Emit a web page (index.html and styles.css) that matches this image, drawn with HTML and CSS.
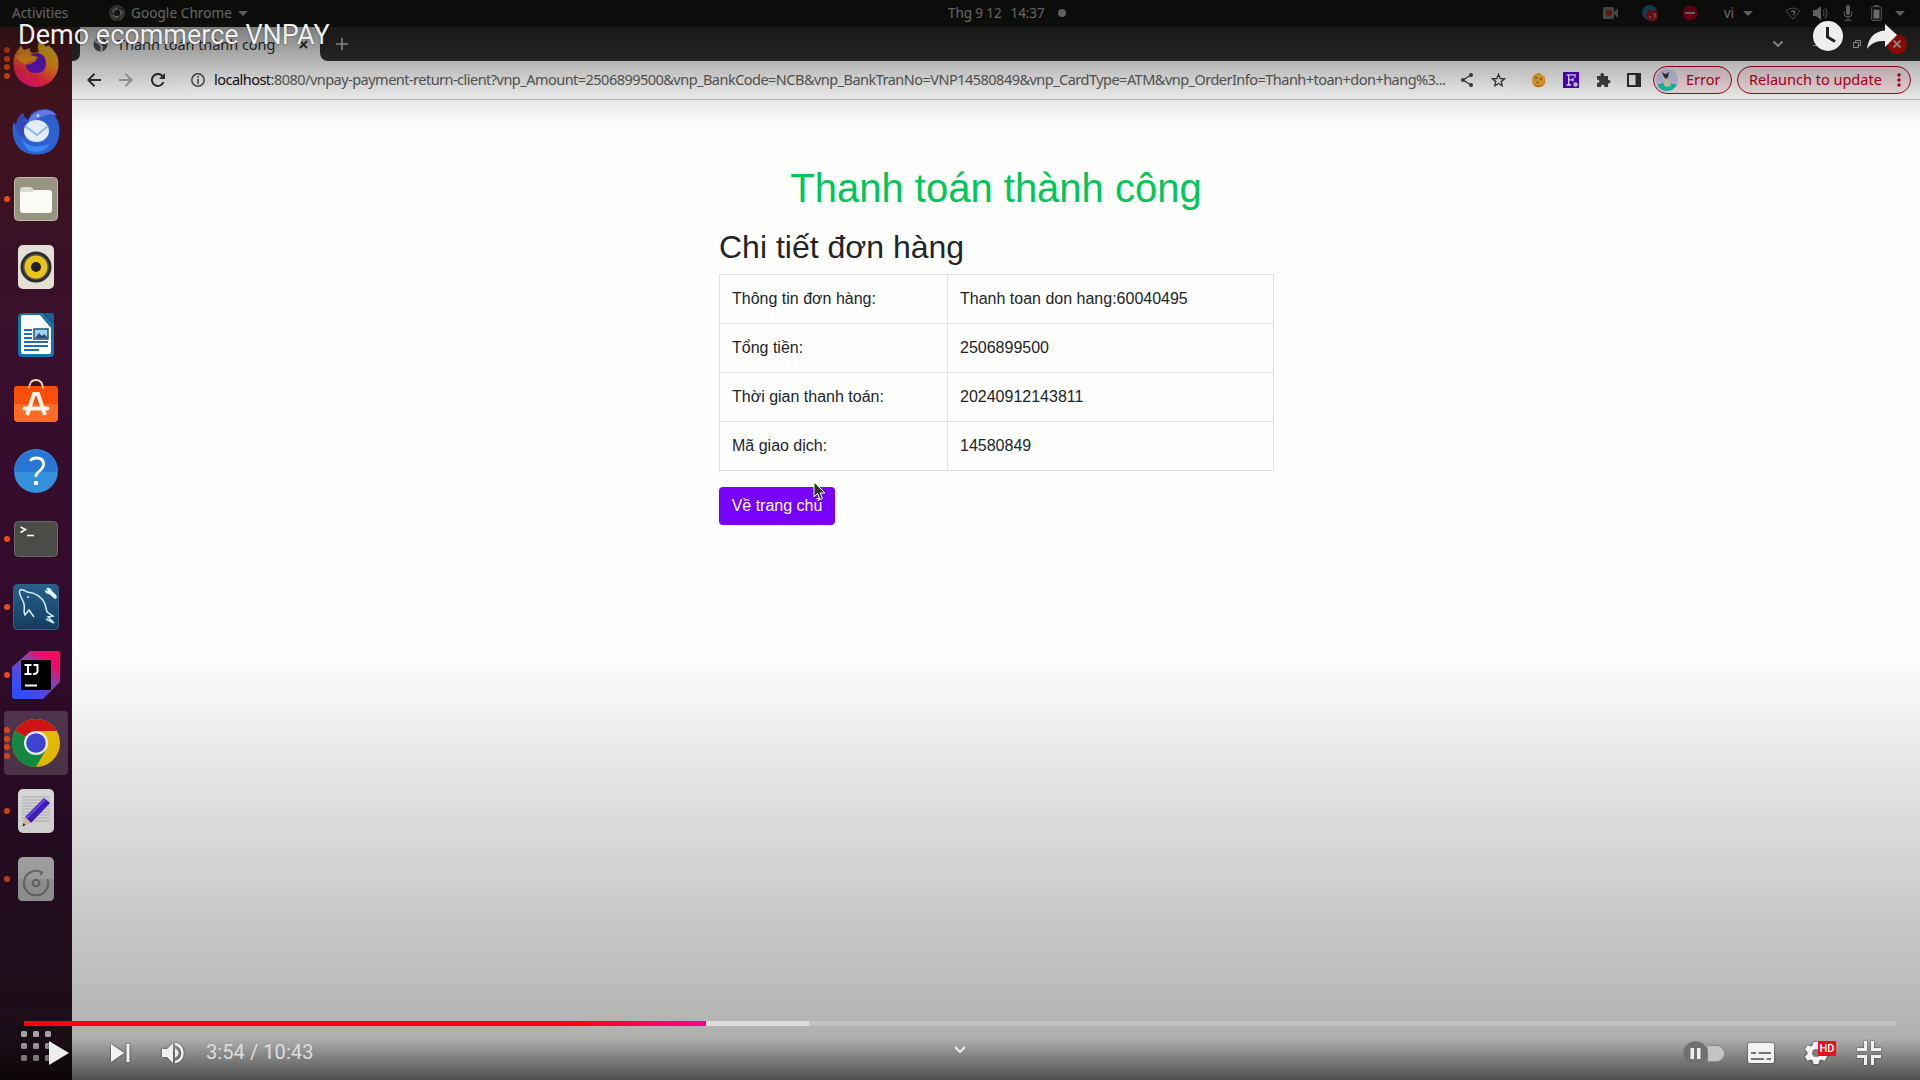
FILE: index.html
```html
<!DOCTYPE html>
<html lang="vi">
<head>
<meta charset="utf-8">
<title>Demo ecommerce VNPAY</title>
<link rel="stylesheet" href="styles.css">
</head>
<body>
<div class="screen">
  <header class="topbar">
    <div class="topbar-left">
      <span class="activities">Activities</span>
      <svg class="app-ico" width="16" height="16" viewBox="0 0 16 16"><circle cx="8" cy="8" r="8" fill="#777"/><circle cx="8" cy="8" r="4" fill="#333" stroke="#ddd" stroke-width="1.4"/><path d="M8 4h7M4.500 10L1 4M11.500 10L8 16" stroke="#333" stroke-width="1"/></svg>
      <span class="app-name">Google Chrome</span>
      <i class="caret"></i>
    </div>
    <div class="clock"><span class="clock-date">Thg 9 12</span><span>14:37</span><i class="dot"></i></div>
    <div class="tray">
      <svg width="16" height="12" viewBox="0 0 16 12"><rect width="11" height="12" rx="1.500" fill="#9a9a9a"/><path d="M11 5l4-4v10l-4-4z" fill="#9a9a9a"/><circle cx="6" cy="6" r="3" fill="#e02a1a"/></svg>
      <svg width="16" height="16" viewBox="0 0 16 16"><circle cx="7.500" cy="7.500" r="7.500" fill="#2b87b5"/><rect x="4" y="5" width="12" height="11" rx="5" fill="#e0202a"/><path d="M7 12h2M11 9h2v3" stroke="#fff" stroke-width="1" fill="none"/></svg>
      <svg width="16" height="16" viewBox="0 0 16 16"><circle cx="8" cy="8" r="7.500" fill="#d80030"/><path d="M3 8h10" stroke="#ddd" stroke-width="2"/></svg>
      <span class="lang">vi</span>
      <i class="caret lang-caret"></i>
      <svg class="wifi" width="16" height="13" viewBox="0 0 16 13"><path d="M1 4q7-6 14 0L8 12z" fill="none" stroke="#aaa" stroke-width="1"/><path d="M6 5q2-2 4 0q0 1-2 3" fill="none" stroke="#ddd" stroke-width="1.400"/></svg>
      <svg class="spk" width="16" height="14" viewBox="0 0 16 14"><path d="M0 4h3l5-4v14l-5-4H0z" fill="#ddd"/><path d="M10 4q2 3 0 6M12 2q4 5 0 10" fill="none" stroke="#999" stroke-width="1.300"/></svg>
      <svg class="mic" width="10" height="16" viewBox="0 0 10 16"><rect x="3" width="4" height="10" rx="2" fill="#ddd"/><path d="M1 6v2q0 4 4 4t4-4V6M5 12v3M2 15.300h6" fill="none" stroke="#ccc"/></svg>
      <svg class="bat" width="11" height="16" viewBox="0 0 11 16"><path d="M3.500 0h4v2h-4z" fill="#ccc"/><rect x=".7" y="1.700" width="9.600" height="13.600" rx="1" fill="none" stroke="#ccc"/><rect x="2.500" y="4.500" width="6" height="9" fill="#eee"/></svg>
      <i class="caret"></i>
    </div>
  </header>

  <div class="desktop">
    <nav class="dock">
      <div class="dock-item"><span class="pips"><i></i><i></i><i></i><i></i></span>
        <svg width="48" height="48" viewBox="0 0 48 48"><defs><linearGradient id="ff" x1=".75" y1="0" x2=".3" y2="1"><stop offset="0" stop-color="#ffe32c"/><stop offset=".4" stop-color="#ff9a18"/><stop offset=".75" stop-color="#ff2b45"/><stop offset="1" stop-color="#f0148a"/></linearGradient></defs><path d="M28 1q4 3 6 7q2-1 2-2q11 8 10.500 20A22.500 22.500 0 0 1 1.500 25Q1 17 6 11l3-5q1 4 3 5l6-2q-1 3 2 5l7-1Q24 7 28 1z" fill="url(#ff)"/><path d="M15 20q3-6 10-6q9 1 9 10q0 10-10 10t-10-9q3 2 6-1q3-2 5-2q-4-3-10-2z" fill="#6b19d2"/><path d="M4 18q4-4 11-3l11 3q-2 4-7 4t-5 4Q7 22 4 18z" fill="#ffa21c"/></svg></div>
      <div class="dock-item">
        <svg width="48" height="48" viewBox="0 0 48 48"><path d="M16 13Q20 2 33 2q8 0 12 7l-3-1q6 6 5.500 17Q46 47 25 47.500Q5 48 1 28Q0 18 2 15l2 3q2-9 7-12q1 5 5 7z" fill="#2d62d3"/><path d="M17 13Q22 3 34 3q8 1 10 5q-8-2-15 2t-12 8z" fill="#6f7cf0"/><path d="M4 18q2-9 7-12q1 5 4 9q-5 7-2 16Q4 27 4 18z" fill="#3949bd"/><ellipse cx="24.500" cy="24" rx="12.500" ry="11" fill="#e4efff"/><path d="M13 19l12 9l11-9" fill="none" stroke="#91b8ef" stroke-width="2"/><path d="M10 32q8 12 28 5q-6 8-15 8T10 32z" fill="#3a8bf5"/><circle cx="26" cy="8.500" r="1.500" fill="#aef"/></svg></div>
      <div class="dock-item"><span class="pips"><i></i></span>
        <svg width="48" height="48" viewBox="0 0 48 48"><rect x="2.500" y="2.500" width="43" height="43" rx="4" fill="#979481" stroke="#bebcaa"/><path d="M8 15q0-3 3-3h7q2 0 4 3l2 2v4H8z" fill="#dcdace"/><path d="M8 19q0-2 2-2h10l3-2h14q3 0 3 3v17q0 3-3 3H11q-3 0-3-3z" fill="#fbfbf5"/></svg></div>
      <div class="dock-item">
        <svg width="48" height="48" viewBox="0 0 48 48"><rect x="6" y="2" width="36" height="44" rx="5" fill="#e3dfd5"/><circle cx="24" cy="24" r="15.500" fill="#2b2c30"/><circle cx="24" cy="24" r="13" fill="#4e4f51"/><circle cx="24" cy="24" r="11.500" fill="#e9c51c"/><circle cx="24" cy="24" r="5" fill="#202022"/></svg></div>
      <div class="dock-item">
        <svg width="48" height="48" viewBox="0 0 48 48"><path d="M11 2h20l11 11v29q0 4-4 4H10q-4 0-4-4V7q0-5 5-5z" fill="#1775ad"/><path d="M11 4h17l11 13v24q0 2-2 2H11q-2 0-2-2V6q0-2 2-2z" fill="#fbfdff"/><path d="M32 2h8q2 0 2 2v9z" fill="#1b5f93"/><path d="M12 19h8M12 23h8M12 27h8M12 31h24M12 35h24M12 39h15" stroke="#1d73a7" stroke-width="1.800"/><rect x="22" y="18" width="14" height="10" fill="#9bd3f4" stroke="#24516b" stroke-width="1.500"/><path d="M23 27l4-5l3 3l2-2l4 4z" fill="#27516b"/></svg></div>
      <div class="dock-item">
        <svg width="48" height="48" viewBox="0 0 48 48"><path d="M17 11Q17 1 24 1t7 10" fill="none" stroke="#f5d7ac" stroke-width="1.800"/><rect x="2" y="7" width="44" height="36" rx="4" fill="#ff6b25"/><path d="M2 25V11q0-4 4-4h36q4 0 4 4v14z" fill="#fa4f09"/><path d="M17 9.500Q17.500 8 17 7M31 9.500Q30.500 8 31 7" stroke="#f5d7ac" stroke-width="1.800"/><path d="M15 36l7-21h4l7 21" fill="none" stroke="#fff4e8" stroke-width="4"/><path d="M12.500 29.500h23" stroke="#fff4e8" stroke-width="4" stroke-linecap="round"/></svg></div>
      <div class="dock-item">
        <svg width="48" height="48" viewBox="0 0 48 48"><circle cx="24" cy="24" r="22" fill="#3492dc"/><path d="M2 25a22 22 0 0 1 44 0z" fill="#2975d3"/><path d="M18.500 14q1-3 6-3q7 0 7 6q0 4-4 7t-3.500 6" fill="none" stroke="#fff" stroke-width="2.800"/><circle cx="24" cy="36" r="2.300" fill="#fff"/></svg></div>
      <div class="dock-item"><span class="pips"><i></i></span>
        <svg width="48" height="48" viewBox="0 0 48 48"><rect x="2.500" y="6.500" width="43" height="35" rx="4" fill="#4b4b47" stroke="#6b6b67"/><path d="M8.500 12l5 2.500l-5 3" fill="none" stroke="#fff" stroke-width="1.600"/><path d="M15 20.500h7" stroke="#fff" stroke-width="1.600"/></svg></div>
      <div class="dock-item"><span class="pips"><i></i></span>
        <svg width="48" height="48" viewBox="0 0 48 48"><defs><linearGradient id="my" x2="0" y2="1"><stop stop-color="#28608d"/><stop offset="1" stop-color="#133d60"/></linearGradient></defs><rect x="1.500" y="1.500" width="45" height="45" rx="4" fill="url(#my)" stroke="#316386"/><path d="M11 18Q6 9 8 7q3-1 7 2q13 1 18 12l2 8l6 4l-5 1l6 6l-8-4M11 18q2 4 1 11l1 3l4-5l5 7" fill="none" stroke="#d9edff" stroke-width="1.500"/><circle cx="16" cy="14" r="1" fill="#d9edff"/><path d="M34 5q4-1 6 3l4 4q2 3-1 4l-6-5q-4 0-4-4l3 1z" fill="#e5f3ff"/></svg></div>
      <div class="dock-item"><span class="pips"><i></i></span>
        <svg width="48" height="48" viewBox="0 0 48 48"><defs><linearGradient id="ij" x1=".9" y1="0" x2=".2" y2=".8"><stop stop-color="#ff0758"/><stop offset=".25" stop-color="#f00b70"/><stop offset=".5" stop-color="#8447b7"/><stop offset="1" stop-color="#354fff"/></linearGradient></defs><path d="M18 0h27q3 0 3 3v28L31 48H3q-3 0-3-3V16z" fill="url(#ij)"/><rect x="9" y="9" width="30" height="30" fill="#000"/><path d="M12.500 14h7M16 14v9M12.500 23h7M21.500 14h4v6q0 3.200-4.500 3M13 34.500h12" fill="none" stroke="#fff" stroke-width="2"/></svg></div>
      <div class="dock-item active"><span class="pips"><i></i><i></i><i></i><i></i></span>
        <svg width="48" height="48" viewBox="0 0 48 48"><circle cx="24" cy="24" r="24" fill="#f5c900"/><path d="M24 24L3.200 12A24 24 0 0 1 44.800 12z" fill="#da1717"/><path d="M3.200 12A24 24 0 0 0 24 48L34.400 30L24 24z" fill="#159447"/><path d="M24 12h20.800L34 24z" fill="#f5c900"/><circle cx="24" cy="24" r="12" fill="#fff"/><circle cx="24" cy="24" r="9.800" fill="#4248e4"/></svg></div>
      <div class="dock-item"><span class="pips"><i></i></span>
        <svg width="48" height="48" viewBox="0 0 48 48"><rect x="6" y="2" width="36" height="44" rx="5" fill="#f1f1f1"/><path d="M10 10h28M10 13h28M10 16h28M10 19h28M10 22h28M10 25h28M10 28h28M10 31h28M10 34h28" stroke="#c3c3c3"/><path d="M32 11l6 5L19 36l-6-6z" fill="#4820d2"/><path d="M33 12.500L14.500 31" stroke="#7252ff" stroke-width="2"/><path d="M13 30l6 6l-8 3z" fill="#f1d4ab"/><path d="M11.500 36l2 2l-3 1.500z" fill="#222"/></svg></div>
      <div class="dock-item"><span class="pips"><i></i></span>
        <svg width="48" height="48" viewBox="0 0 48 48"><rect x="6" y="2" width="36" height="44" rx="5" fill="#bcbcbc"/><path d="M6 24h36v17q0 5-5 5H11q-5 0-5-5z" fill="#adadad"/><path d="M35.500 24a12.200 12.200 0 1 1-5.500-6.500L28.500 20" fill="none" stroke="#777" stroke-width="2"/><circle cx="24" cy="28" r="3.300" fill="none" stroke="#777" stroke-width="2"/></svg></div>
      <div class="apps"><i></i><i></i><i></i><i></i><i></i><i></i><i></i><i></i><i></i></div>
    </nav>

    <main class="browser">
      <div class="tabstrip">
        <div class="tab-lead"></div>
        <div class="tab">
          <svg width="15" height="15" viewBox="0 0 15 15"><circle cx="7.500" cy="7.500" r="7" fill="#555a5e"/><path d="M2 4l4 2l3 4l-1 4M9 1l-1 3l5 3" fill="none" stroke="#ddd" stroke-width="2"/></svg>
          <span class="tab-title">Thanh toán thành công</span>
          <svg width="9" height="9" viewBox="0 0 9 9"><path d="M1 1l7 7M8 1L1 8" stroke="#333" stroke-width="1.800"/></svg>
        </div>
        <div class="tab-rest">
          <svg class="plus" width="12" height="12" viewBox="0 0 12 12"><path d="M6 0v12M0 6h12" stroke="#ddd" stroke-width="1.600"/></svg>
          <div class="win-btns">
            <svg width="12" height="8" viewBox="0 0 12 8"><path d="M1.500 1.500L6 6l4.500-4.500" fill="none" stroke="#ddd" stroke-width="1.800"/></svg>
            <svg class="min" width="8" height="8" viewBox="0 0 8 8"><path d="M0 5.500h8" stroke="#ccc"/></svg>
            <svg class="max" width="8" height="8" viewBox="0 0 8 8"><path d="M.5 2.500h5v5h-5zM2.500 2V.5h5v5H6" fill="none" stroke="#ddd"/></svg>
            <svg width="20" height="20" viewBox="0 0 20 20"><circle cx="10" cy="10" r="10" fill="#e0100a"/><path d="M6.500 6.500l7 7M13.500 6.500l-7 7" stroke="#f0d0c0" stroke-width="1.800"/></svg>
          </div>
        </div>
      </div>

      <div class="toolbar">
        <div class="nav-btns">
          <svg width="14" height="14" viewBox="0 0 14 14"><path d="M14 7H1.500M7.500 .8L1.300 7l6.200 6.200" fill="none" stroke="#333" stroke-width="2"/></svg>
          <svg width="14" height="14" viewBox="0 0 14 14"><path d="M0 7h12.500M6.500 .8L12.700 7l-6.200 6.200" fill="none" stroke="#aaa" stroke-width="1.800"/></svg>
          <svg width="14" height="14" viewBox="0 0 14 14"><path d="M12.500 9.200A6 6 0 1 1 11.500 3" fill="none" stroke="#333" stroke-width="2"/><path d="M14 0v6H8z" fill="#333"/></svg>
        </div>
        <div class="omnibox">
          <svg width="14" height="14" viewBox="0 0 14 14"><circle cx="7" cy="7" r="6.200" fill="none" stroke="#555" stroke-width="1.500"/><path d="M7 6v5M7 3v1.700" stroke="#555" stroke-width="1.600"/></svg>
          <span class="url"><b>localhost</b>:8080/vnpay-payment-return-client?vnp_Amount=2506899500&amp;vnp_BankCode=NCB&amp;vnp_BankTranNo=VNP14580849&amp;vnp_CardType=ATM&amp;vnp_OrderInfo=Thanh+toan+don+hang%3...</span>
          <svg class="share" width="12" height="14" viewBox="0 0 12 14"><path d="M10 2L2 7l8 5" fill="none" stroke="#444" stroke-width="1.400"/><circle cx="10" cy="2" r="2" fill="#444"/><circle cx="2" cy="7" r="2" fill="#444"/><circle cx="10" cy="12" r="2" fill="#444"/></svg>
          <svg class="star" width="15" height="14" viewBox="0 0 15 14"><path d="M7.500 1.500l1.700 4 4.300.3-3.300 2.800 1 4.200-3.700-2.300-3.700 2.300 1-4.200L1.500 5.800l4.300-.3z" fill="none" stroke="#444" stroke-width="1.400"/></svg>
        </div>
        <div class="exts">
          <svg width="16" height="16" viewBox="0 0 16 16"><path d="M8 1q2 0 3 2l3 2q1 6-2 8t-6 2q-5-1-5-7t7-7z" fill="#f9b233"/><path d="M1.500 10q2 4 7 3.500t6-5.500q0 4-3 6t-6 1t-4-5z" fill="#d9821a"/><circle cx="5" cy="6" r="1" fill="#8c4d13"/><circle cx="10" cy="7" r="1" fill="#8c4d13"/><circle cx="6.500" cy="10.500" r="1" fill="#8c4d13"/></svg>
          <svg width="16" height="16" viewBox="0 0 16 16"><rect width="16" height="16" fill="#5800d8"/><path d="M3.500 2.800h8.500v3M5.700 3v10M3.500 13H8M6 7.800h4M10 6v3.500" fill="none" stroke="#fff" stroke-width="1.300"/><circle cx="12.500" cy="12.500" r="2.200" fill="#d4e6b0"/></svg>
          <svg width="16" height="16" viewBox="0 0 16 16"><path d="M2 4h3.500q-.5-3 1.700-3T9 4h4v4q2.500-.5 2.500 1.600T13 11.500V15H9.500q0-2.500-1.800-2.500T6 15H2v-4q2.500 0 2.500-1.700T2 7.500z" fill="#444"/></svg>
          <svg width="14" height="14" viewBox="0 0 14 14"><rect x="1" y="1" width="12" height="12" fill="none" stroke="#333" stroke-width="2"/><path d="M8.500 1h5v12h-5z" fill="#333"/></svg>
        </div>
        <div class="pill error">
          <svg width="22" height="22" viewBox="0 0 22 22"><defs><clipPath id="av"><circle cx="11" cy="11" r="11"/></clipPath></defs><g clip-path="url(#av)"><rect width="22" height="22" fill="#cfcdf0"/><path d="M0 16q10-4 22 0v6H0z" fill="#17cdb5"/><path d="M8 7h4l-1 4q4 2 4 6l-5 1l-2-2z" fill="#e0ddb4"/><path d="M6 3l3 2h1l3-2l-1 5l-2 2l-2-2z" fill="#333"/></g></svg>
          <span>Error</span>
        </div>
        <div class="pill relaunch"><span>Relaunch to update</span>
          <svg width="4" height="14" viewBox="0 0 4 14"><circle cx="2" cy="2" r="1.700"/><circle cx="2" cy="7" r="1.700"/><circle cx="2" cy="12" r="1.700"/></svg>
        </div>
      </div>

      <section class="page">
        <div class="order">
          <h1>Thanh toán thành công</h1>
          <h2>Chi tiết đơn hàng</h2>
          <table>
            <tr><td class="k">Thông tin đơn hàng:</td><td>Thanh toan don hang:60040495</td></tr>
            <tr><td class="k">Tổng tiền:</td><td>2506899500</td></tr>
            <tr><td class="k">Thời gian thanh toán:</td><td>20240912143811</td></tr>
            <tr><td class="k">Mã giao dịch:</td><td>14580849</td></tr>
          </table>
          <div class="home">
            <a class="btn">Về trang chủ</a>
            <svg class="cursor" width="13" height="20" viewBox="0 0 13 20"><path d="M1 1v15l3.500-3.500L7 18.500l2.500-1L7.200 12H12z" fill="#333" stroke="#fff" stroke-width="1"/></svg>
          </div>
        </div>
      </section>
    </main>
  </div>

  <div class="player">
    <div class="player-top">
      <span class="video-title">Demo ecommerce VNPAY</span>
      <svg class="later" width="30" height="30" viewBox="0 0 30 30"><circle cx="15" cy="15" r="15" fill="#eee"/><path d="M14.500 6v10l7.500 4.500" fill="none" stroke="#222" stroke-width="3"/></svg>
      <svg width="30" height="25" viewBox="0 0 30 25"><path d="M18 0l12 11-12 12v-6Q6 16 0 25Q2 8 18 6.500z" fill="#eee"/></svg>
    </div>
    <div class="player-bottom">
      <div class="progress"><div class="played"></div><div class="buffered"></div></div>
      <div class="controls">
        <div class="ctl-left">
          <svg class="sh" width="20" height="24" viewBox="0 0 20 24"><path d="M0 0l20 12L0 24z" fill="#eee"/></svg>
          <svg class="sh next" width="19" height="18" viewBox="0 0 19 18"><path d="M0 0l13 9L0 18zM15.500 0h3v18h-3z" fill="#f4f4f4"/></svg>
          <svg class="sh vol" width="22" height="22" viewBox="0 0 22 22"><path d="M0 7h5l6-6v20l-6-6H0z" fill="#f0f0f0"/><path d="M13 6.500q3.500 1.500 3.500 4.500T13 15.500z" fill="#f0f0f0"/><path d="M13 1.700Q20.500 4 20.500 11T13 20.300" fill="none" stroke="#f0f0f0" stroke-width="2.500"/></svg>
          <span class="time">3:54 / 10:43</span>
        </div>
        <svg class="more" width="12" height="8" viewBox="0 0 12 8"><path d="M1 1l5 5l5-5" fill="none" stroke="#eee" stroke-width="2"/></svg>
        <div class="ctl-right">
          <div class="auto"><svg width="25" height="25" viewBox="0 0 25 25"><circle cx="12.500" cy="12.500" r="12.200" fill="#707070"/><path d="M7.500 7h3.500v11H7.500zM14 7h3.500v11H14z" fill="#eee"/></svg><i class="track"></i></div>
          <svg class="sh cc" width="26" height="20" viewBox="0 0 26 20"><rect width="26" height="20" rx="2" fill="#f2f2f2"/><path d="M3 10h5M10.500 10H23M3 16h13M18.500 16H23" stroke="#777" stroke-width="2"/></svg>
          <div class="settings">
            <svg class="sh" width="24" height="24" viewBox="0 0 24 24"><path d="M9.500 1h5l.7 3.300 2 1.100L20.500 4.300l2.500 4.300-2.500 2.300v2.200l2.500 2.300-2.500 4.300-3.300-1.100-2 1.100-.7 3.300h-5l-.7-3.300-2-1.100-3.300 1.100L1 15.400l2.500-2.300v-2.200L1 8.600l2.500-4.300 3.300 1.100 2-1.100z" fill="#f2f2f2"/><circle cx="12" cy="12" r="4" fill="#7c7c7c"/></svg>
            <span class="hd">HD</span>
          </div>
          <svg class="sh" width="24" height="24" viewBox="0 0 24 24"><path d="M0 8.500h8.500V0M15.500 0v8.500H24M0 15.500h8.500V24M24 15.500h-8.500V24" fill="none" stroke="#f0f0f0" stroke-width="3"/></svg>
        </div>
      </div>
    </div>
  </div>
</div>
</body>
</html>
```
FILE: styles.css
```css
* { box-sizing: border-box; }
body { margin: 0; background: #fefefe; font-family: "Noto Sans", "Open Sans", sans-serif; }
svg { display: block; flex: none; }
.screen { position: relative; width: 1920px; height: 1080px; overflow: hidden; display: flex; flex-direction: column; }

/* desktop top bar */
.topbar { height: 27px; flex: none; background: #1c1c1a; display: grid; grid-template-columns: 1fr auto 1fr; grid-template-rows: 26px; align-items: center; color: #e4e4e2; font-size: 13.5px; line-height: 20px; }
.topbar-left { display: flex; align-items: center; padding-left: 12px; white-space: nowrap; }
.activities { width: 97px; }
.app-name { margin-left: 6px; letter-spacing: .1px; }
.caret { border: 5px solid transparent; border-top-color: #d8d8d8; border-bottom: 0; margin-left: 6px; }
.clock { display: flex; align-items: center; width: 224px; padding-left: 100px; white-space: nowrap; letter-spacing: -.1px; }
.clock-date { margin-right: 9px; }
.dot { width: 8px; height: 8px; border-radius: 50%; background: #d8d8d8; margin-left: 13px; flex: none; }
.tray { display: flex; align-items: center; justify-content: flex-end; padding-right: 15px; }
.tray svg + svg { margin-left: 23.500px; }
.tray .lang { margin-left: 26px; }
.tray .lang-caret { margin-left: 9px; }
.tray .wifi { margin-left: 32px; }
.tray .spk { margin-left: 12px; }
.tray .mic { margin-left: 14px; }
.tray .bat { margin-left: 18px; }
.tray .caret:last-child { margin-left: 13px; }

.desktop { flex: 1; display: flex; min-height: 0; }

/* dock */
.dock { width: 72px; flex: none; display: flex; flex-direction: column; padding-top: 2px; background: linear-gradient(#5c1f25, #471520 50px, #3b1122 170px, #390f2d 320px, #320a2b 570px, #2c0c28 760px, #26141f); }
.dock-item { height: 64px; margin: 2px 4px; flex: none; border-radius: 4px; display: grid; place-items: center; position: relative; }
.active { background: rgba(255,255,255,.18); }
.pips { position: absolute; left: 0; top: 0; height: 100%; display: flex; flex-direction: column; justify-content: center; gap: 2.800px; }
.pips i { width: 6px; height: 6px; border-radius: 50%; background: #ec4a1a; }
.apps { margin: auto 21px 19px; display: grid; grid-template-columns: repeat(3, 6px); gap: 6px; }
.apps i { height: 6px; border-radius: 1.500px; background: #eee; }

/* browser chrome */
.browser { flex: 1; min-width: 0; display: flex; flex-direction: column; background: #fefefd; }
.tabstrip { height: 34px; flex: none; display: flex; background: #fefefe; }
.tab-lead { width: 8px; background: #32322f; border-bottom-right-radius: 7px; }
.tab { width: 240px; display: flex; align-items: center; padding: 0 12px 0 13px; border-radius: 8px 8px 0 0; color: #333; }
.tab-title { margin-left: 9px; font-size: 14.500px; letter-spacing: -.05px; flex: 1; white-space: nowrap; padding-bottom: 1px; }
.tab-rest { flex: 1; background: #32322f; border-bottom-left-radius: 8px; display: flex; align-items: center; justify-content: space-between; padding: 0 13px 0 16px; }
.win-btns { display: flex; align-items: center; }
.min { margin-left: 29px; }
.max { margin: 0 26px 0 32px; }
.toolbar { height: 39px; flex: none; display: flex; align-items: center; background: #fdfdfd; border-bottom: 1px solid #bdbdba; padding-right: 9px; font-size: 14.500px; line-height: 20px; }
.nav-btns { display: flex; gap: 18px; padding-left: 15px; width: 107px; }
.omnibox { width: 1338px; height: 30px; border-radius: 15px; background: #fff; display: flex; align-items: center; padding-left: 12px; }
.url { margin-left: 9px; width: 1240px; color: #626260; white-space: nowrap; letter-spacing: -.522px; padding-bottom: 2px; }
.url b { font-weight: 400; color: #111; }
.share { margin-left: 7px; }
.star { margin-left: 18px; }
.exts { display: flex; align-items: center; gap: 16px; padding-left: 14px; width: 136px; }
.pill { height: 28px; border: 1px solid #b00020; border-radius: 14px; background: #fbe6ea; color: #bd0020; fill: #bd0020; display: flex; align-items: center; white-space: nowrap; }
.pill span { padding-bottom: 2px; }
.error { width: 79px; padding-left: 2px; gap: 8px; }
.relaunch { width: 174px; margin-left: 5px; padding: 0 9px 0 11px; justify-content: space-between; }

/* order page */
.page { flex: 1; font-family: "Liberation Sans", Arial, sans-serif; font-size: 16px; line-height: 24px; color: #212529; }
.order { width: 554px; margin: 0 auto; padding-top: 64px; }
h1 { margin: 0 0 8px; font-size: 40px; line-height: 48px; font-weight: 400; text-align: center; color: #00c657; }
h2 { margin: 0 0 8px; font-size: 32px; line-height: 38px; font-weight: 400; padding-top: 8px; height: 46px; }
table { width: 555px; border-collapse: collapse; }
td { height: 49px; padding: 12px; border: 1px solid #dee2e6; line-height: 24px; }
.k { width: 228px; }
.home { position: relative; margin-top: 16px; }
.btn { display: inline-block; width: 116px; height: 38px; border-radius: 4px; background: #7700ff; color: #fff; padding: 7px 0; text-align: center; white-space: nowrap; }
.cursor { position: absolute; left: 94px; top: -6px; }

/* video player overlay */
.player { position: absolute; inset: 0; display: flex; flex-direction: column; justify-content: space-between; background:
  linear-gradient(rgba(0,0,0,.62), rgba(0,0,0,.5) 27px, rgba(0,0,0,.29) 61px, rgba(0,0,0,.09) 98px, rgba(0,0,0,.02) 122px, transparent 140px),
  linear-gradient(transparent 645px, rgba(0,0,0,.027) 680px, rgba(0,0,0,.09) 760px, rgba(0,0,0,.17) 860px, rgba(0,0,0,.26) 980px, rgba(0,0,0,.31) 1038px, rgba(0,0,0,.46) 1054px, rgba(0,0,0,.69) 1080px); font-family: Roboto, sans-serif; color: #eee; }
.player-top { display: flex; align-items: center; padding: 15px 23px 0 18px; height: 57px; }
.video-title { flex: 1; font-size: 27px; line-height: 40px; padding-bottom: 2px; text-shadow: 0 0 2px rgba(0,0,0,.6); }
.later { margin-right: 24px; }
.progress { margin: 0 24px; height: 5px; background: rgba(255,255,255,.2); display: flex; }
.played { width: 682px; background: linear-gradient(90deg, #ff0010 80%, #ff0090); }
.buffered { width: 103px; background: rgba(255,255,255,.45); }
.controls { height: 54px; display: grid; grid-template-columns: 1fr auto 1fr; align-items: center; }
.player-bottom { height: 59px; }
.sh { filter: drop-shadow(0 0 1px rgba(0,0,0,.6)); }
.ctl-left { display: flex; align-items: center; padding-left: 49px; }
.next { margin-left: 42px; }
.vol { margin-left: 32px; }
.time { margin-left: 22px; font-size: 20px; line-height: 24px; color: #ddd; margin-bottom: 2px; letter-spacing: .08px; }
.more { margin-bottom: 7px; }
.ctl-right { display: flex; align-items: center; justify-content: flex-end; padding-right: 39px; }
.auto { width: 42px; display: flex; align-items: center; margin-right: 23px; }
.track { flex: 1; height: 17px; border: 1px solid #8a8a88; border-left: 0; border-radius: 0 9px 9px 0; background: #c4c4c4; }
.settings { position: relative; margin: 0 29px 0 30px; }
.hd { position: absolute; left: 14px; top: 0; width: 18px; height: 15px; background: #e8101c; color: #fff; font-size: 11px; line-height: 15px; text-align: center; font-weight: 500; }
```
